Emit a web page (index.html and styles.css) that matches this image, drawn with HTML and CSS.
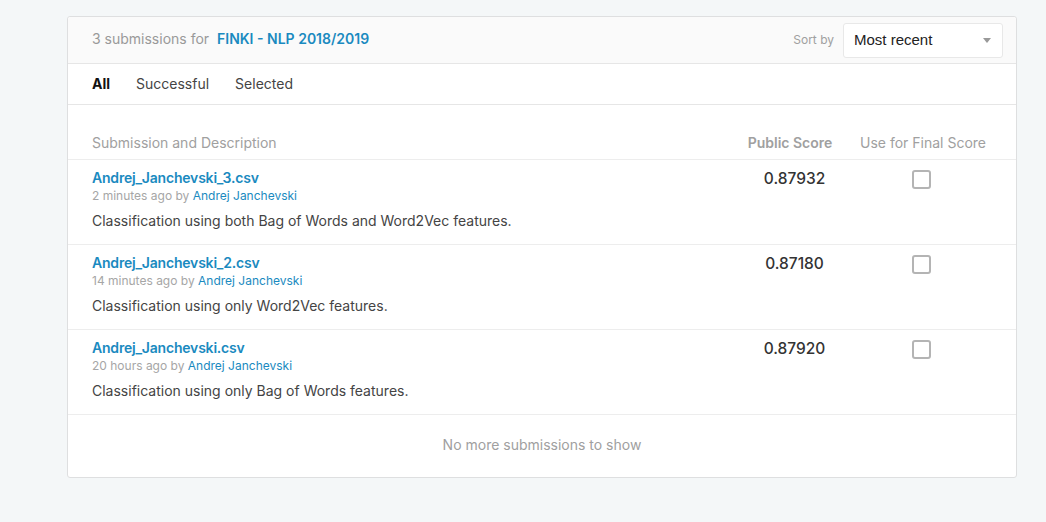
FILE: index.html
```html
<!DOCTYPE html>
<html lang="en">
<head>
<meta charset="utf-8">
<title>Submissions</title>
<link rel="stylesheet" href="styles.css">
</head>
<body>
<div class="page">
  <section class="card">
    <header class="card-head">
      <div class="title"><span class="count">3 submissions for</span> <a class="comp" href="#">FINKI - NLP 2018/2019</a></div>
      <div class="sort">
        <span class="sort-label">Sort by</span>
        <div class="select"><span>Most recent</span><span class="caret"></span></div>
      </div>
    </header>
    <nav class="tabs">
      <span class="tab active">All</span>
      <span class="tab">Successful</span>
      <span class="tab">Selected</span>
    </nav>
    <div class="thead">
      <div class="col-desc">Submission and Description</div>
      <div class="col-score strong">Public Score</div>
      <div class="col-final">Use for Final Score</div>
    </div>
    <div class="row">
      <div class="col-desc">
        <a class="file" href="#">Andrej_Janchevski_3.csv</a>
        <div class="meta">2 minutes ago by <a href="#">Andrej Janchevski</a></div>
        <div class="desc">Classification using both Bag of Words and Word2Vec features.</div>
      </div>
      <div class="col-score score">0.87932</div>
      <div class="col-final"><span class="check"></span></div>
    </div>
    <div class="row">
      <div class="col-desc">
        <a class="file" href="#">Andrej_Janchevski_2.csv</a>
        <div class="meta">14 minutes ago by <a href="#">Andrej Janchevski</a></div>
        <div class="desc">Classification using only Word2Vec features.</div>
      </div>
      <div class="col-score score">0.87180</div>
      <div class="col-final"><span class="check"></span></div>
    </div>
    <div class="row">
      <div class="col-desc">
        <a class="file" href="#">Andrej_Janchevski.csv</a>
        <div class="meta">20 hours ago by <a href="#">Andrej Janchevski</a></div>
        <div class="desc">Classification using only Bag of Words features.</div>
      </div>
      <div class="col-score score">0.87920</div>
      <div class="col-final"><span class="check"></span></div>
    </div>
    <div class="foot">No more submissions to show</div>
  </section>
</div>
</body>
</html>
```
FILE: styles.css
```css
* { box-sizing: border-box; }
html, body { margin: 0; height: 100%; }
body {
  background: #f4f7f8;
  font-family: Inter, "Liberation Sans", Arial, sans-serif;
  font-size: 14px;
  color: #3c3c3c;
}
a { text-decoration: none; color: #1a8ac0; }
.page { padding: 16px 29px 0 67px; }
.card {
  background: #fff;
  border: 1px solid #dedfe0;
  border-radius: 3px;
  width: 950px;
}
.card-head {
  height: 47px;
  background: #fafafa;
  border-bottom: 1px solid #e6e6e6;
  display: flex;
  align-items: center;
  justify-content: space-between;
  padding: 0 13px 0 24px;
  border-radius: 3px 3px 0 0;
}
.title { font-size: 14px; line-height: 18px; margin-top: -2px; }
.count { color: #999; }
.comp { color: #1a8ac0; font-weight: 600; margin-left: 4px; }
.sort { display: flex; align-items: center; gap: 9px; }
.sort-label { color: #a0a0a0; font-size: 12px; margin-top: -1px; }
.select {
  width: 160px;
  height: 35px;
  background: #fff;
  border: 1px solid #e8e8e8;
  border-radius: 3px;
  display: flex;
  align-items: center;
  justify-content: space-between;
  padding: 0 11px 2px 10px;
  font-family: "Liberation Sans", Arial, sans-serif;
  font-size: 15px;
  color: #222;
}
.caret {
  width: 0; height: 0;
  border-left: 4px solid transparent;
  border-right: 4px solid transparent;
  border-top: 5px solid #999;
  margin-top: 2px;
}
.tabs {
  height: 41px;
  border-bottom: 1px solid #e6e6e6;
  display: flex;
  align-items: center;
  padding-left: 24px;
  padding-bottom: 2px;
  gap: 26px;
  font-size: 14px;
  color: #444;
}
.tab.active { color: #111; font-weight: 700; }
.thead, .row {
  display: grid;
  grid-template-columns: 1fr 96px 158px;
  column-gap: 4px;
  padding: 0 14px 0 24px;
}
.thead {
  height: 55px;
  align-items: end;
  padding-bottom: 8px;
  color: #a0a0a0;
  border-bottom: 1px solid #ededed;
}
.thead .strong { font-weight: 600; padding-right: 4px; }
.col-score { text-align: center; }
.col-final { text-align: center; }
.row {
  border-bottom: 1px solid #ededed;
  height: 85px;
  padding-top: 9px;
}
.file { display: block; font-weight: 600; line-height: 18px; letter-spacing: -0.2px; }
.meta { font-size: 12px; line-height: 16px; color: #a6a6a6; margin-top: 1px; }
.meta a { color: #1a8ac0; }
.desc { margin-top: 7px; line-height: 20px; color: #444; }
.score { font-weight: 500; font-size: 15.5px; line-height: 19px; color: #333; padding-left: 5px; }
.check {
  display: inline-block;
  width: 19px;
  height: 19px;
  border: 2px solid #b4b4b4;
  border-radius: 3px;
  margin-top: 1px;
  margin-left: -3px;
}
.foot {
  height: 62px;
  display: flex;
  align-items: center;
  justify-content: center;
  padding-bottom: 3px;
  color: #a0a0a0;
}
```
